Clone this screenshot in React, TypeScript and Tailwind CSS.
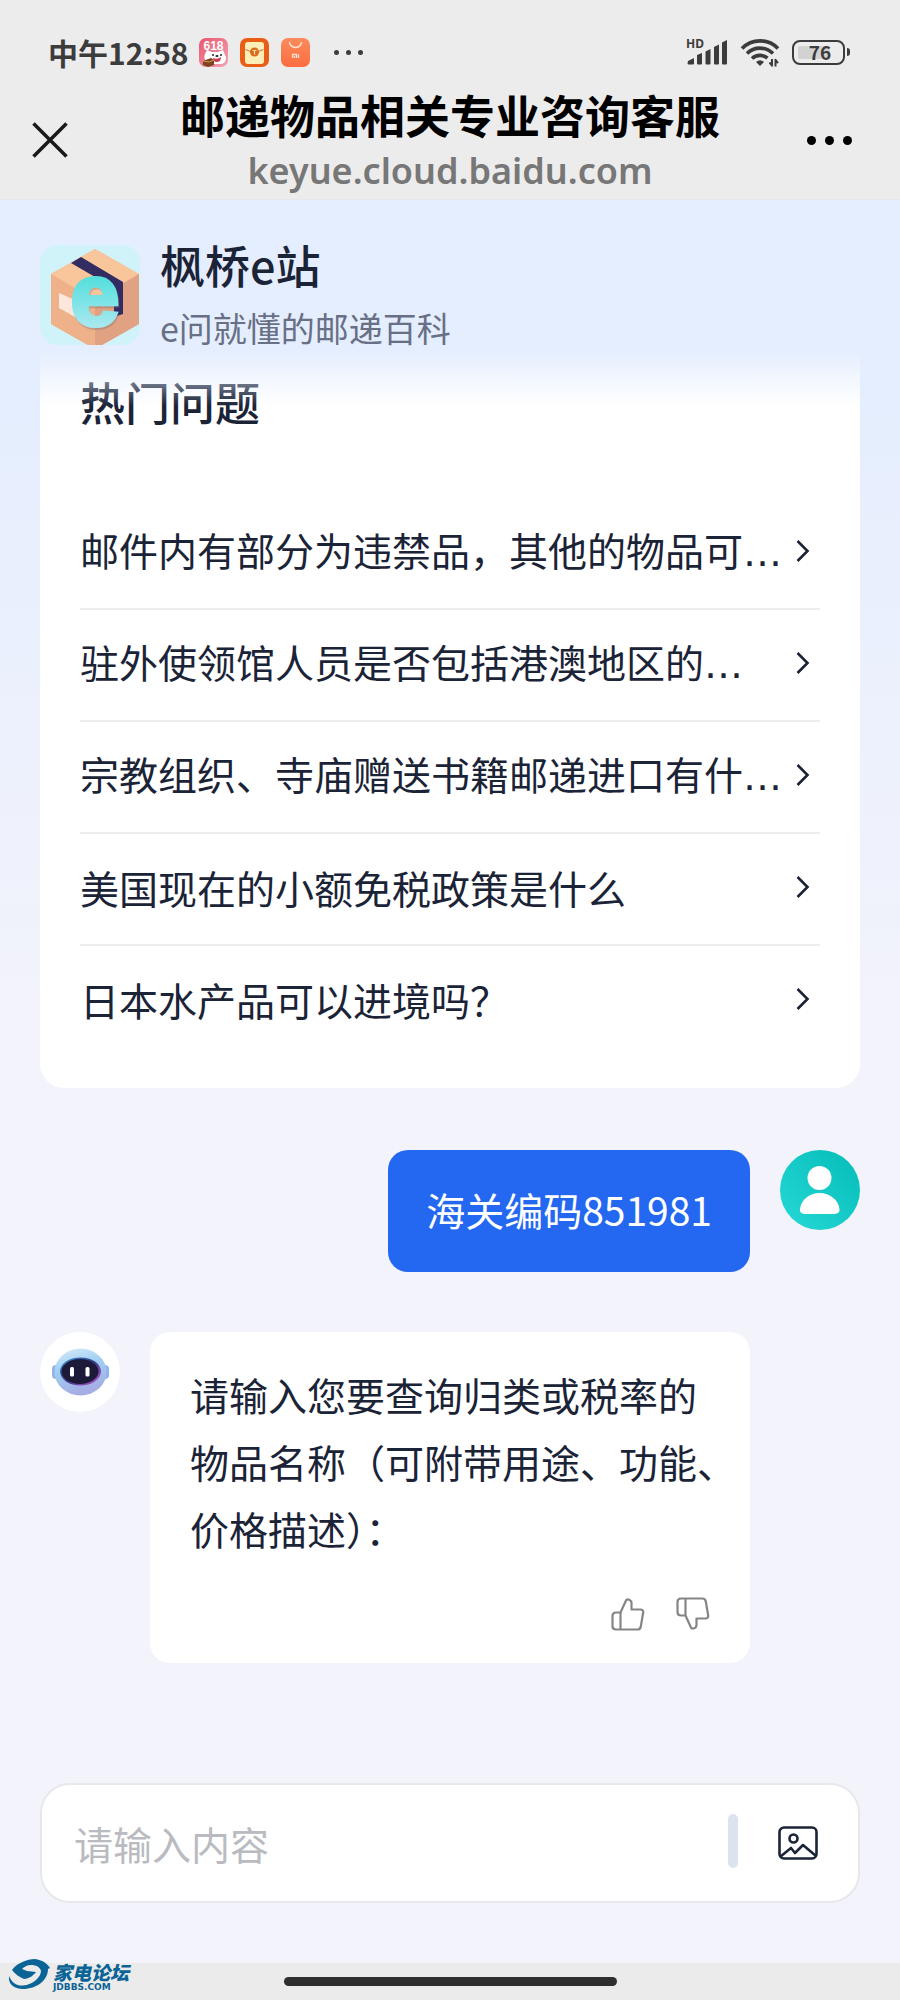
import { useState } from "react";

const HOT_QUESTIONS = [
  { text: "邮件内有部分为违禁品，其他的物品可", cut: true },
  { text: "驻外使领馆人员是否包括港澳地区的", cut: true },
  { text: "宗教组织、寺庙赠送书籍邮递进口有什", cut: true },
  { text: "美国现在的小额免税政策是什么", cut: false },
  { text: "日本水产品可以进境吗？", cut: false },
];

const REPLY_LINES = [
  "请输入您要查询归类或税率的",
  "物品名称（可附带用途、功能、",
  "价格描述）：",
];

function PromoAppIcon() {
  return (
    <svg viewBox="0 0 29 29" className="size-[29px]" aria-hidden="true">
      <defs>
        <linearGradient id="promo" x1="0" y1="0" x2="1" y2="1">
          <stop offset="0" stopColor="#e8566a" />
          <stop offset="1" stopColor="#f3a3b8" />
        </linearGradient>
      </defs>
      <rect width="29" height="29" rx="7" fill="url(#promo)" />
      <text x="14.5" y="12" textAnchor="middle" fontSize="12" fontWeight="700" fill="#fff" fontFamily="Liberation Sans, sans-serif">
        618
      </text>
      <path d="M6 16l2-4 5 2h6l5-2 2 5c2 3 1 7-3 9H12c-5-2-8-5-6-10z" fill="#fff" />
      <circle cx="14" cy="17" r="1" fill="#222" />
      <circle cx="22" cy="17" r="1" fill="#222" />
      <ellipse cx="18" cy="18" rx="1.6" ry="1" fill="#222" />
      <path d="M14 20q4 2 8-1 0 5-4 5t-4-4z" fill="#d43a50" />
      <path d="M4 23l8-3 3 2v5l-6 2-5-2z" fill="#7b4320" />
      <path d="M4 23l6 1 5-2" fill="none" stroke="#d79a55" strokeWidth="1" />
    </svg>
  );
}

function EnvelopeAppIcon() {
  return (
    <svg viewBox="0 0 29 29" className="size-[29px]" aria-hidden="true">
      <rect width="29" height="29" rx="7" fill="#e95d16" />
      <rect x="5" y="4" width="19" height="22" rx="3" fill="#fdeeb8" />
      <path d="M5.500 11.500L14.500 15l9-3.500" fill="none" stroke="#c8702f" strokeWidth="1" />
      <circle cx="14.500" cy="14" r="4.500" fill="#d96b1c" />
      <path d="M12.500 12.500h4M14.500 12.500v4" stroke="#fbe0a0" strokeWidth="1.200" />
    </svg>
  );
}

function StoreAppIcon() {
  return (
    <svg viewBox="0 0 29 29" className="size-[29px]" aria-hidden="true">
      <defs>
        <linearGradient id="store" x1="0" y1="0" x2="0" y2="1">
          <stop offset="0" stopColor="#f98b5c" />
          <stop offset="1" stopColor="#fc6d40" />
        </linearGradient>
      </defs>
      <rect width="29" height="29" rx="7" fill="url(#store)" />
      <path d="M8.500 4a6 5.500 0 0 0 12 0" fill="none" stroke="#ffe3d3" strokeWidth="1.500" />
      <path d="M11.500 20v-3.500h4V20M13.500 18v2M17.500 16.300V20" fill="none" stroke="#ffe3d3" strokeWidth="1.300" />
    </svg>
  );
}

function SignalIcon() {
  return (
    <svg viewBox="0 0 42 30" className="h-[30px] w-[42px] overflow-visible" fill="#3c3c3c" aria-hidden="true">
      <text x="0" y="11" fontSize="12" fontWeight="700" fontFamily="Noto Sans, sans-serif">
        HD
      </text>
      <path d="M2 24l6-3v5.500a1 1 0 0 1-1 1H2.500a1 1 0 0 1-1-1z" />
      <path d="M11 18l5-2v10.500a1 1 0 0 1-1 1h-3a1 1 0 0 1-1-1z" />
      <path d="M19.500 14.500l5-2.500v14.500a1 1 0 0 1-1 1h-3a1 1 0 0 1-1-1z" />
      <path d="M28 10l5-2.500v19a1 1 0 0 1-1 1h-3a1 1 0 0 1-1-1z" />
      <path d="M36 5.500L41 3v23.500a1 1 0 0 1-1 1h-3a1 1 0 0 1-1-1z" />
    </svg>
  );
}

function WifiIcon() {
  return (
    <svg viewBox="0 0 40 30" className="h-[30px] w-10" fill="none" stroke="#3c3c3c" strokeWidth="3.600" aria-hidden="true">
      <path d="M2 11.500a25 25 0 0 1 36 0" />
      <path d="M7 16.500a18.500 18.500 0 0 1 26 0" />
      <path d="M12 21.500a12 12 0 0 1 15.500-.5" />
      <path d="M16 25q4-3.500 8 0l-4 4z" fill="#3c3c3c" stroke="none" />
      <path d="M32 22v7.500M35.500 22v7.500M32.500 29l-3-3.500M35 22.500l3 3.500" strokeWidth="2" />
    </svg>
  );
}

function StatusBar() {
  return (
    <div className="flex h-[84px] items-center justify-between pt-5 pr-[50px] pl-12 text-[#3c3c3c]">
      <div className="flex items-center">
        <span className="text-[30px] leading-8 font-bold">中午12:58</span>
        <span className="ml-[10px] flex items-center gap-3">
          <PromoAppIcon />
          <EnvelopeAppIcon />
          <StoreAppIcon />
        </span>
        <span className="ml-6 flex gap-[7px]">
          <i className="size-[5px] rounded-full bg-[#3c3c3c]" />
          <i className="size-[5px] rounded-full bg-[#3c3c3c]" />
          <i className="size-[5px] rounded-full bg-[#3c3c3c]" />
        </span>
      </div>
      <div className="flex items-center gap-3">
        <SignalIcon />
        <WifiIcon />
        <span className="flex items-center gap-[2px]">
          <span className="flex h-[25px] w-[53px] items-center rounded-lg border-2 border-[#3c3c3c] p-1">
            <span className="flex h-full w-8 items-center justify-center rounded-xs bg-[#d2d2d2] pl-3 text-[19px] font-bold">
              76
            </span>
          </span>
          <i className="h-2 w-[3px] rounded-r-sm bg-[#3c3c3c]" />
        </span>
      </div>
    </div>
  );
}

function NavBar() {
  return (
    <div className="flex h-[115px] items-start justify-between px-8">
      <button type="button" aria-label="关闭" className="mt-[38px] w-20">
        <svg viewBox="0 0 36 36" className="size-9" stroke="#191919" strokeWidth="3.500" aria-hidden="true">
          <path d="M1.500 1.500l33 33M34.500 1.500l-33 33" />
        </svg>
      </button>
      <div className="text-center whitespace-nowrap">
        <h1 className="text-[45px] leading-[62px] font-bold text-black">
          邮递物品相关专业咨询客服
        </h1>
        <p className="mt-[3px] font-['Noto_Sans'] text-[36px] leading-[44px] font-semibold text-[#777777]">
          keyue.cloud.baidu.com
        </p>
      </div>
      <button type="button" aria-label="更多" className="mt-[52px] flex w-20 justify-end gap-[9px] pr-4">
        <i className="size-[9px] rounded-full bg-black" />
        <i className="size-[9px] rounded-full bg-black" />
        <i className="size-[9px] rounded-full bg-black" />
      </button>
    </div>
  );
}

function ParcelLogo() {
  return (
    <svg viewBox="0 0 100 100" className="size-[100px] shrink-0 overflow-visible" aria-hidden="true">
      <defs>
        <linearGradient id="eFill" x1="0" y1="0.200" x2="0" y2="0.900">
          <stop offset="0" stopColor="#3fdcd8" />
          <stop offset="1" stopColor="#b5eaf2" />
        </linearGradient>
        <clipPath id="tile">
          <rect width="100" height="100" rx="18" />
        </clipPath>
      </defs>
      <g clipPath="url(#tile)">
        <rect width="100" height="100" fill="#cff3f8" />
        <path d="M55 4l44 25v50l-44 25-44-25V29z" fill="#f0b68d" />
        <path d="M55 4l44 25-44 26-44-26z" fill="#f9c59b" />
        <path d="M11 29l44 26v49L11 79z" fill="#efb189" />
        <path d="M99 29L55 55v49l44-25z" fill="#e0a283" />
        <path d="M41 12l42 25v32l-9 3V43L31 18z" fill="#322c62" />
        <path d="M19 48l16 7v17l-16-9z" fill="#fde6dc" />
      </g>
      <text x="56" y="82" textAnchor="middle" fontSize="88" fontWeight="700" fontFamily="Liberation Sans, sans-serif" fill="#7a6a70" stroke="#7a6a70" strokeWidth="4" opacity="0.3">
        e
      </text>
      <text x="55" y="80" textAnchor="middle" fontSize="88" fontWeight="700" fontFamily="Liberation Sans, sans-serif" fill="url(#eFill)" stroke="url(#eFill)" strokeWidth="4">
        e
      </text>
    </svg>
  );
}

function HotQuestions() {
  return (
    <section className="relative rounded-b-3xl bg-white px-10 pt-5 pb-8">
      <h2 className="mb-16 text-[45px] leading-16 font-medium">热门问题</h2>
      <ul>
        {HOT_QUESTIONS.map((q) => (
          <li key={q.text} className="border-b-2 border-[#ededf0] last:border-b-0">
            <button type="button" className="flex h-[110px] w-full items-center justify-between pb-1 text-left">
              <span className="whitespace-nowrap">
                {q.text}
                {q.cut && <span className="font-['DejaVu_Sans']">…</span>}
              </span>
              <svg viewBox="0 0 14 24" className="mr-[10px] h-6 w-[14px] shrink-0" fill="none" stroke="#1b2337" strokeWidth="2.600" aria-hidden="true">
                <path d="M1.500 2l10 10-10 10" />
              </svg>
            </button>
          </li>
        ))}
      </ul>
      <div className="pointer-events-none absolute inset-x-0 top-0 h-14 bg-linear-to-b from-[#e5eefe] to-[#e5eefe]/0" />
    </section>
  );
}

function UserAvatar() {
  return (
    <svg viewBox="0 0 80 80" className="size-20 shrink-0" aria-hidden="true">
      <defs>
        <linearGradient id="teal" x1="1" y1="0" x2="0" y2="1">
          <stop offset="0" stopColor="#04bcb8" />
          <stop offset="1" stopColor="#27d9d6" />
        </linearGradient>
      </defs>
      <circle cx="40" cy="40" r="40" fill="url(#teal)" />
      <circle cx="39.500" cy="28" r="12" fill="#fff" />
      <path d="M20 59c1-9 9-16 19.500-16S58.500 50 59.500 59c.3 3.500-1.500 5-7 5h-26c-5.500 0-6.800-1.500-6.500-5z" fill="#fff" />
    </svg>
  );
}

function BotAvatar() {
  return (
    <svg viewBox="0 0 80 80" className="size-20 shrink-0" aria-hidden="true">
      <defs>
        <linearGradient id="helmet" x1="0" y1="0" x2="0.300" y2="1">
          <stop offset="0" stopColor="#dcecf6" />
          <stop offset="0.450" stopColor="#9fd0f4" />
          <stop offset="1" stopColor="#a4aee4" />
        </linearGradient>
        <linearGradient id="visor" x1="0" y1="0" x2="1" y2="1">
          <stop offset="0" stopColor="#2f8fd6" />
          <stop offset="0.500" stopColor="#3a3a86" />
          <stop offset="1" stopColor="#c05ad0" />
        </linearGradient>
      </defs>
      <circle cx="40" cy="40" r="40" fill="#fff" />
      <rect x="12" y="33" width="10" height="14" rx="4" fill="#94b2e2" />
      <rect x="59" y="33" width="10" height="14" rx="4" fill="#8fb4ea" />
      <ellipse cx="40.500" cy="40" rx="26" ry="23.500" fill="url(#helmet)" />
      <ellipse cx="40.500" cy="39.500" rx="20.500" ry="14" fill="url(#visor)" />
      <ellipse cx="40" cy="39.500" rx="18.500" ry="12.500" fill="#1c1a38" />
      <rect x="30" y="35" width="4" height="9.500" rx="1.500" fill="#fff" />
      <rect x="45.500" y="35" width="4" height="9.500" rx="1.500" fill="#fff" />
    </svg>
  );
}

function ThumbIcon() {
  return (
    <svg viewBox="0 0 34 34" className="size-[34px]" fill="none" stroke="#858585" strokeWidth="2.200" strokeLinejoin="round" aria-hidden="true">
      <path d="M9.500 15.500L15 3.500c.8-2 5.500-1 5.500 2.500v6.500h9c2 0 3 1.300 2.700 3l-2.400 14c-.3 2-1.300 3-3.300 3H5c-2.500 0-3.500-1-3.500-3.500V19c0-2.500 1-3.500 3.500-3.500z" />
      <path d="M9.500 15.500v17" />
    </svg>
  );
}

function Composer() {
  const [value, setValue] = useState("");

  return (
    <form className="mx-10 mb-15 flex h-[120px] items-center rounded-[30px] border-2 border-[#e8e8ea] bg-white pr-10 pb-1 pl-8">
      <input
        aria-label="请输入内容"
        placeholder="请输入内容"
        value={value}
        onChange={(e) => setValue(e.target.value)}
        className="h-16 min-w-0 flex-1 bg-transparent pt-1 leading-[60px] outline-none placeholder:text-[#b9bbc0]"
      />
      <i className="h-[54px] w-[10px] rounded-full bg-[#dce3ef]" />
      <button type="button" aria-label="图片" className="ml-10 pt-1">
        <svg viewBox="0 0 40 34" className="h-[34px] w-10" fill="none" stroke="#1b2337" strokeWidth="2.600" strokeLinejoin="round" aria-hidden="true">
          <rect x="1.500" y="1.500" width="37" height="31" rx="4.500" />
          <circle cx="15.500" cy="12.500" r="4" />
          <path d="M2.500 30.500L13 22l4 5 8-8 13 11" />
        </svg>
      </button>
    </form>
  );
}

function ForumMark() {
  return (
    <div className="absolute -top-1 left-2 flex items-start gap-[3px] text-[#0b6496]">
      <svg viewBox="0 0 42 31" className="h-[31px] w-[42px]" aria-hidden="true">
        <path d="M4 11C9 4 19 0 27 0c7 1 12 4 15 9l-2 1c0 11-11 20-25 20C6 30 0 25 1 17c3 7 8 10 14 9.500C25 26 33 18 33 12c-1-4-5-6-10-6-4 0-7 2-9 4l5 2 9 1c-2 3-7 7-12 7C11 18 7 15 4 11z" fill="currentColor" />
      </svg>
      <div className="mt-[2px]">
        <p className="text-[19px] leading-[22px] font-black italic">家电论坛</p>
        <p className="font-['DejaVu_Sans'] text-[9px] leading-[9px] font-bold">JDBBS.COM</p>
      </div>
    </div>
  );
}

export default function App() {
  return (
    <div className="flex min-h-screen flex-col bg-[#f2f3fb] bg-linear-to-b from-[#e5eefe] from-20% to-[#f2f3fb] to-50% font-['Noto_Sans_CJK_SC',sans-serif] text-[39px] leading-[60px] text-[#1b2337]">
      <header className="border-b border-[#e4e7ee] bg-[#ececec]">
        <StatusBar />
        <NavBar />
      </header>

      <main className="flex flex-1 flex-col px-10 pt-[45px]">
        <div className="mb-[5px] flex h-[100px] gap-5">
          <ParcelLogo />
          <div className="-mt-[2px]">
            <p className="text-[45px] leading-11 font-medium">枫桥e站</p>
            <p className="mt-6 text-[34px] leading-[34px] text-[#687085]">e问就懂的邮递百科</p>
          </div>
        </div>

        <HotQuestions />

        <div className="mt-[62px] flex items-start justify-end gap-[30px]">
          <p className="rounded-[20px] bg-[#2468f2] px-[38px] pt-[29px] pb-[33px] text-white">
            海关编码851981
          </p>
          <UserAvatar />
        </div>

        <div className="mt-15 flex items-start gap-[30px] pr-[110px]">
          <BotAvatar />
          <div className="min-w-0 flex-1 rounded-[20px] bg-white px-10 pt-[29px] pb-8">
            {REPLY_LINES.map((line) => (
              <p key={line} className="leading-[67px] whitespace-nowrap">
                {line}
              </p>
            ))}
            <div className="mt-[35px] flex justify-end gap-[31px]">
              <button type="button" aria-label="赞" className="block">
                <ThumbIcon />
              </button>
              <button type="button" aria-label="踩" className="-scale-y-100">
                <ThumbIcon />
              </button>
            </div>
          </div>
        </div>
      </main>

      <Composer />

      <footer className="relative flex h-[37px] items-center justify-center bg-[#ebebeb]">
        <ForumMark />
        <i className="h-[9px] w-[37%] rounded-full bg-[#2e2e2e]" />
      </footer>
    </div>
  );
}
